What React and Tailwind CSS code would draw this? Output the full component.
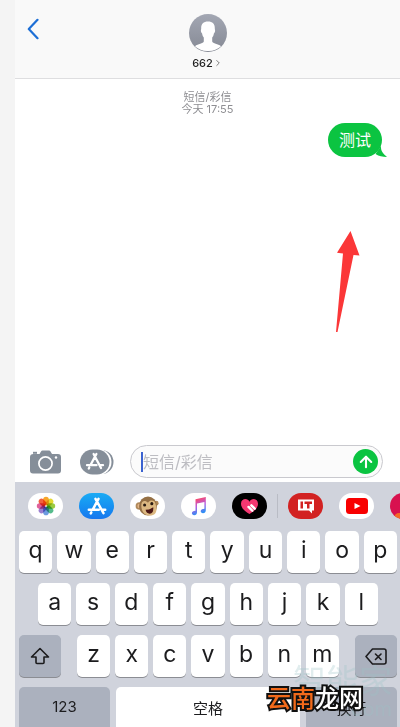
import { ChevronRight, ArrowUp } from "lucide-react";

const topRow = ["q", "w", "e", "r", "t", "y", "u", "i", "o", "p"];
const homeRow = ["a", "s", "d", "f", "g", "h", "j", "k", "l"];
const bottomRow = ["z", "x", "c", "v", "b", "n", "m"];

const petals = [
  { angle: 0, color: "#f7a62a" },
  { angle: 45, color: "#e3d832" },
  { angle: 90, color: "#9bcb3f" },
  { angle: 135, color: "#55bb8c" },
  { angle: 180, color: "#6d9be0" },
  { angle: 225, color: "#9c7fd0" },
  { angle: 270, color: "#e0609a" },
  { angle: 315, color: "#f2603f" },
];

function Key({ children }) {
  return (
    <button
      type="button"
      className="flex h-[42px] min-w-0 flex-1 items-center justify-center rounded-[5px] bg-white pb-1 text-[23px] leading-7 text-[#1c1c1e] shadow-[0_1px_0_#8b8d93]"
    >
      {children}
    </button>
  );
}

function Avatar() {
  return (
    <svg viewBox="0 0 38 38" className="size-[38px]" aria-hidden="true">
      <defs>
        <linearGradient id="avatar" x1="0" y1="0" x2="0" y2="1">
          <stop offset="0" stopColor="#a3a7b3" />
          <stop offset="1" stopColor="#858994" />
        </linearGradient>
      </defs>
      <circle cx="19" cy="19" r="19" fill="url(#avatar)" />
      <path
        fill="white"
        d="M19 7.500c4.500 0 7 2.600 6.800 6.900 0 1 .4 1.400.3 2.600-.1 1.200-.7 1.800-1.200 2.400-.3 2-.9 3-1.700 4v4.200c.6 2.100 5.800 2.200 8.800 4.600A18 18 0 0 1 19 37a18 18 0 0 1-13-4.800c3-2.400 8.200-2.500 8.800-4.600v-4.200c-.8-1-1.400-2-1.700-4-.5-.6-1.100-1.200-1.200-2.400-.1-1.200.3-1.600.3-2.600-.2-4.300 2.300-6.900 6.800-6.900Z"
      />
    </svg>
  );
}

function Header() {
  return (
    <header className="grid grid-cols-[1fr_auto_1fr] items-start border-b border-[#dedee0] bg-[#f9f9f9] px-3 pb-2 pt-[14px]">
      <button type="button" aria-label="返回" className="justify-self-start pt-1">
        <svg viewBox="0 0 12 22" className="h-[22px] w-3" aria-hidden="true">
          <path
            d="M10.500 1.800 1.800 11l8.700 9.200"
            fill="none"
            stroke="#1d6fd6"
            strokeWidth="2.200"
            strokeLinecap="round"
            strokeLinejoin="round"
          />
        </svg>
      </button>
      <button type="button" className="flex flex-col items-center gap-1">
        <Avatar />
        <span className="flex items-center text-[11px] font-medium leading-[14px] text-[#222]">
          662
          <ChevronRight className="size-2.5 text-[#666]" />
        </span>
      </button>
    </header>
  );
}

function Conversation() {
  return (
    <main className="relative grow px-3 pt-3">
      <p className="text-center text-[11px] leading-3 text-[#8e8e92]">
        短信/彩信
        <br />
        今天 17:55
      </p>
      <div className="mt-2 flex justify-end pr-1.5">
        <div className="relative flex h-[34px] items-center rounded-full bg-[#0bc441] px-[11px] text-base leading-6 text-white">
          测试
          <svg
            viewBox="0 0 16 12"
            className="absolute -right-[5px] bottom-0 h-3 w-4"
            aria-hidden="true"
          >
            <path d="M10 1C9.500 6 12.500 9 16 12 11.500 12 8 11.300 4.500 9Z" fill="#0bc441" />
          </svg>
        </div>
      </div>
      <svg
        viewBox="0 0 24 102"
        className="absolute right-10 top-[152px] h-[102px] w-6"
        aria-hidden="true"
      >
        <path d="M14.500 0 23.500 24.500l-6-.5L1.500 101H0L7 22.500l-6-.8Z" fill="#fb3738" />
      </svg>
    </main>
  );
}

function Composer() {
  return (
    <form
      className="flex items-center pb-1 pl-[15px] pr-[17px]"
      onSubmit={(e) => e.preventDefault()}
    >
      <button type="button" aria-label="相机">
        <svg viewBox="0 0 31 24" className="h-6 w-[31px]" aria-hidden="true">
          <path
            fill="#858e99"
            d="M3.500 4h6l1.500-2.600Q11.500.5 12.500.5h6.500q1 0 1.500.9L22 4h6q3 0 3 3v13.500q0 3-3 3H3q-3 0-3-3V7q0-3 3.500-3Z"
          />
          <path fill="#858e99" d="M3 1.800h4v2H3z" />
          <circle cx="15.500" cy="13.500" r="6.600" fill="none" stroke="white" strokeWidth="1.700" />
          <circle cx="26" cy="7.500" r="1.200" fill="white" />
        </svg>
      </button>
      <button type="button" aria-label="应用" className="ml-[19px]">
        <svg viewBox="0 0 34 26" className="h-[26px] w-[34px]" aria-hidden="true">
          <rect x="4" y="1" width="29.500" height="24" rx="12" fill="#858e99" />
          <rect x="-1" width="32.500" height="26" rx="13" fill="white" />
          <rect y=".5" width="29.500" height="25" rx="12.500" fill="#858e99" />
          <g fill="none" stroke="white" strokeWidth="2.300" strokeLinecap="round">
            <path d="M13.600 5 21 19M16.400 5 10.800 15.500M7 16.200h9.500M20.500 16.200H23M9.300 18.500l-.5 1" />
          </g>
        </svg>
      </button>
      <div className="ml-4 flex h-[33px] min-w-0 grow items-center rounded-full border border-[#c9c9ce] bg-[#fbfbfb] pl-2.5 pr-1">
        <span className="h-5 w-0.5 shrink-0 bg-[#3b62d0]" />
        <input
          type="text"
          aria-label="短信/彩信"
          placeholder="短信/彩信"
          className="h-6 w-full min-w-0 bg-transparent text-base leading-6 outline-none placeholder:text-[#bdbdc2]"
        />
        <button
          type="submit"
          aria-label="发送"
          className="flex size-[25px] shrink-0 items-center justify-center rounded-full bg-[#0bc441] text-white"
        >
          <ArrowUp className="size-[18px]" strokeWidth={2.8} />
        </button>
      </div>
    </form>
  );
}

function AppPill({ label, className, children }) {
  return (
    <button
      type="button"
      aria-label={label}
      className={`flex h-[26px] w-[35px] shrink-0 items-center justify-center overflow-hidden rounded-full ${className}`}
    >
      {children}
    </button>
  );
}

function AppStrip() {
  return (
    <div className="flex items-center gap-4 overflow-hidden pl-[13px]">
      <AppPill label="照片" className="bg-white">
        <svg viewBox="-10 -10 20 20" className="size-5" aria-hidden="true">
          {petals.map((p) => (
            <rect
              key={p.angle}
              x="-2.800"
              y="-9.200"
              width="5.600"
              height="8.400"
              rx="2.800"
              fill={p.color}
              className="mix-blend-multiply"
              transform={`rotate(${p.angle})`}
            />
          ))}
        </svg>
      </AppPill>
      <AppPill label="App Store" className="bg-linear-to-b from-[#1cabf4] to-[#1877ee]">
        <svg
          viewBox="0 0 20 18"
          className="h-[18px] w-5"
          fill="none"
          stroke="white"
          strokeWidth="2.500"
          strokeLinecap="round"
          aria-hidden="true"
        >
          <path d="M8.500 1.800 16.500 16.200M11.500 1.800 6 12.200M1.800 12.800h10M15.800 12.800h2.400M4.300 15.400l-.5 1" />
        </svg>
      </AppPill>
      <AppPill label="动话表情" className="bg-white">
        <svg viewBox="0 0 26 24" className="h-[23px] w-[25px]" aria-hidden="true">
          <circle cx="4.500" cy="11.500" r="3.900" fill="#b08a5c" />
          <circle cx="4.800" cy="11.500" r="2.300" fill="#e3b587" />
          <circle cx="22" cy="8.500" r="2.600" fill="#b08a5c" />
          <ellipse cx="13.500" cy="11.500" rx="9.300" ry="10" fill="#957045" />
          <path d="M6.500 11c0-5 4-6 7-3 3-4 8-2 8 2 2 5 1 11.500-6 11.500-6 0-9-5-9-10.500Z" fill="#dcb881" />
          <circle cx="10" cy="10.500" r="1.600" fill="#2a1b12" />
          <circle cx="17.500" cy="9" r="1.600" fill="#2a1b12" />
          <path d="M11 15.500q4.500 0 8-2.800.5 6.300-3.500 6.800-3.500.2-4.500-4Z" fill="#4b1715" />
        </svg>
      </AppPill>
      <AppPill label="音乐" className="bg-white">
        <svg viewBox="0 0 20 20" className="size-5" aria-hidden="true">
          <defs>
            <linearGradient id="note" x1="0.3" y1="0" x2="0.6" y2="1">
              <stop offset="0.1" stopColor="#fb4a6a" />
              <stop offset="0.5" stopColor="#b65be0" />
              <stop offset="0.9" stopColor="#2f8ff5" />
            </linearGradient>
          </defs>
          <path
            fill="url(#note)"
            d="M6.500 3.200 16.800 1v13.200c0 2-1.200 3-2.800 3-1.400 0-2.300-.8-2.300-1.900 0-1.500 1.300-2.100 3.700-2.500V6L8 7.500v8.700c0 2-1.200 3-2.800 3-1.400 0-2.300-.8-2.300-1.900 0-1.500 1.200-2.100 3.600-2.500Z"
          />
        </svg>
      </AppPill>
      <AppPill label="Digital Touch" className="bg-black">
        <svg viewBox="0 0 20 18" className="h-[17px] w-[19px]" aria-hidden="true">
          <path d="M10 17C5 14 1 10.500 1 6c0-5.500 7-6.500 9-2 2-4.500 9-3.500 9 2 0 4.500-4 8-9 11Z" fill="#f43771" />
          <path d="m9 9.500 4 4M12 7.800l3.500 3.500" stroke="white" strokeWidth="2.600" strokeLinecap="round" />
        </svg>
      </AppPill>
      <span className="-mx-1.5 h-6 w-px shrink-0 bg-[#b9bcc5]" />
      <AppPill label="IT之家" className="bg-[#d22222]">
        <svg viewBox="0 0 18 16" className="h-4 w-[18px]" aria-hidden="true">
          <path d="M1 1.500h16v11h-2v3l-3-3H1Z" fill="white" />
          <path d="M3.500 3.500h2.500v7H3.500zM7.500 3.500h7.500V6h-2.500v4.500H10V6H7.500z" fill="#d22222" />
        </svg>
      </AppPill>
      <AppPill label="YouTube" className="bg-white">
        <svg viewBox="0 0 22 16" className="h-4 w-[22px]" aria-hidden="true">
          <rect width="22" height="16" rx="3.500" fill="#f80000" />
          <path d="m8.500 5 6 3-6 3Z" fill="white" />
        </svg>
      </AppPill>
      <AppPill label="更多" className="bg-[#d8114f]">
        <svg viewBox="0 0 35 26" className="h-[26px] w-[35px]" aria-hidden="true">
          <circle cx="9" cy="25" r="5" fill="#f46a26" />
        </svg>
      </AppPill>
    </div>
  );
}

function Keyboard() {
  return (
    <section className="overflow-hidden bg-[#d0d3dc] pt-[11px]">
      <AppStrip />
      <div className="mt-3 flex flex-col gap-2.5 pl-1 pr-[3px]">
        <div className="flex gap-[5px]">
          {topRow.map((k) => (
            <Key key={k}>{k}</Key>
          ))}
        </div>
        <div className="flex gap-[5px] px-[19px]">
          {homeRow.map((k) => (
            <Key key={k}>{k}</Key>
          ))}
        </div>
        <div className="flex justify-between gap-4">
          <button
            type="button"
            aria-label="Shift"
            className="flex h-[42px] w-[42px] items-center justify-center rounded-[5px] bg-[#abb1be] shadow-[0_1px_0_#8b8d93]"
          >
            <svg
              viewBox="0 0 20 20"
              className="size-5"
              fill="none"
              stroke="#1c1c1e"
              strokeWidth="1.600"
              strokeLinejoin="round"
              aria-hidden="true"
            >
              <path d="M10 2.500 1.500 11H6v5.500q0 1 1 1h6q1 0 1-1V11h4.500Z" />
            </svg>
          </button>
          <div className="flex grow gap-[5px]">
            {bottomRow.map((k) => (
              <Key key={k}>{k}</Key>
            ))}
          </div>
          <button
            type="button"
            aria-label="删除"
            className="flex h-[42px] w-[42px] items-center justify-center rounded-[5px] bg-[#abb1be] shadow-[0_1px_0_#8b8d93]"
          >
            <svg
              viewBox="0 0 22 17"
              className="h-[17px] w-[22px]"
              fill="none"
              stroke="#1c1c1e"
              strokeWidth="1.600"
              strokeLinejoin="round"
              strokeLinecap="round"
              aria-hidden="true"
            >
              <path d="M7.500 1H19q2 0 2 2v11q0 2-2 2H7.500L1 8.500ZM10.500 6l5.500 5.500M16 6l-5.500 5.500" />
            </svg>
          </button>
        </div>
        <div className="flex gap-1.5 text-[15px] leading-5 text-[#1c1c1e]">
          <button type="button" className="h-10 w-[91px] rounded-t-[5px] bg-[#abb1be]">
            123
          </button>
          <button type="button" className="h-10 grow rounded-t-[5px] bg-white pt-1">
            空格
          </button>
          <button type="button" className="h-10 w-[91px] rounded-t-[5px] bg-[#abb1be] pt-1">
            换行
          </button>
        </div>
      </div>
    </section>
  );
}

function Watermarks() {
  return (
    <div className="pointer-events-none absolute inset-0">
      <div className="absolute bottom-2 right-2 text-right text-[#9cc3c8]/30">
        <p className="text-[33px] leading-9">智能家</p>
        <p className="text-xl leading-5">.com</p>
      </div>
      <p className="absolute bottom-3 right-[37px] text-2xl font-medium leading-8 text-white [-webkit-text-stroke:4px_#111] [paint-order:stroke_fill]">
        <span className="text-[#f26a1b]">云南</span>龙网
      </p>
    </div>
  );
}

export default function App() {
  return (
    <div className="relative h-screen overflow-hidden bg-[#f4f4f4] pl-[15px] font-[Inter,'Noto_Sans_CJK_SC',sans-serif]">
      <div className="flex h-full flex-col bg-white">
        <Header />
        <Conversation />
        <Composer />
        <Keyboard />
      </div>
      <Watermarks />
    </div>
  );
}
